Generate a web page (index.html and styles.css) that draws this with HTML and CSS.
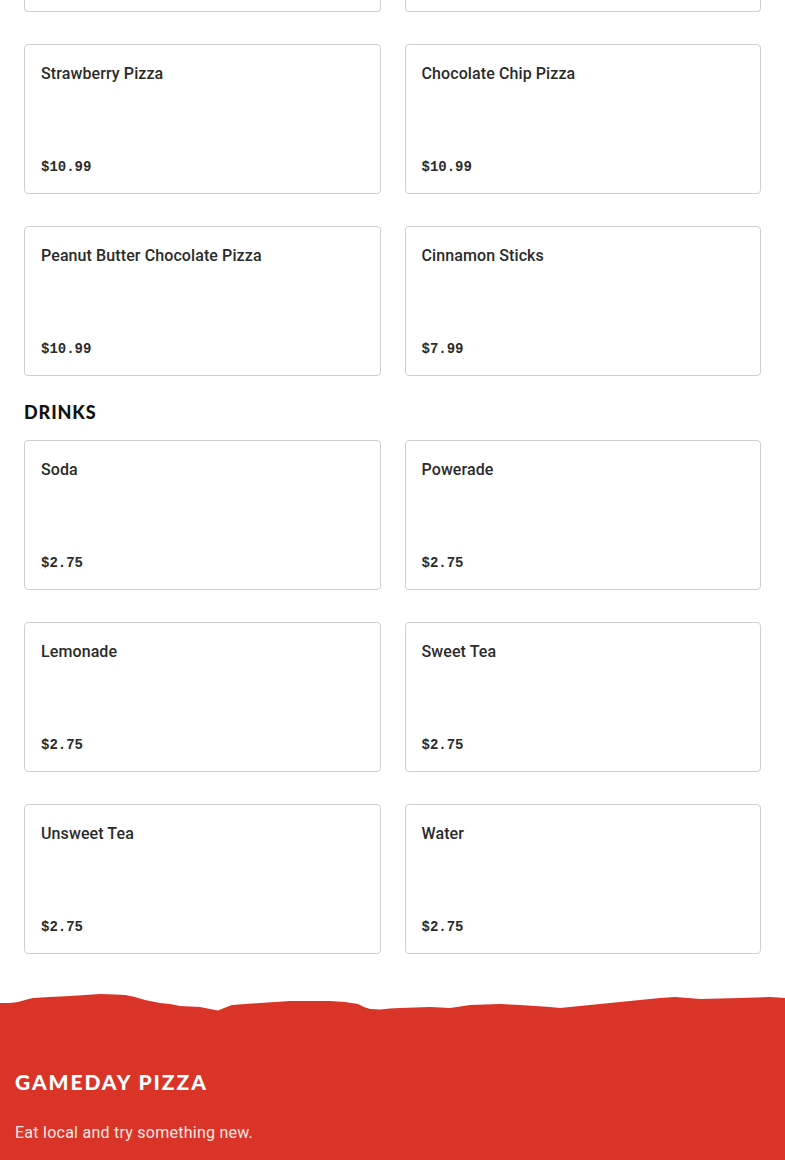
FILE: index.html
```html
<!DOCTYPE html>
<html lang="en">
<head>
<meta charset="utf-8">
<title>Gameday Pizza Menu</title>
<link rel="stylesheet" href="styles.css">
</head>
<body>
<main class="menu">
  <section class="section">
    <div class="grid">
      <div class="card card-stub" aria-hidden="true"></div>
      <div class="card card-stub" aria-hidden="true"></div>
      <div class="card"><h3 class="card-title">Strawberry Pizza</h3><p class="price">$10.99</p></div>
      <div class="card"><h3 class="card-title">Chocolate Chip Pizza</h3><p class="price">$10.99</p></div>
      <div class="card"><h3 class="card-title">Peanut Butter Chocolate Pizza</h3><p class="price">$10.99</p></div>
      <div class="card"><h3 class="card-title">Cinnamon Sticks</h3><p class="price">$7.99</p></div>
    </div>
  </section>
  <section class="section">
    <h2 class="section-title">DRINKS</h2>
    <div class="grid">
      <div class="card"><h3 class="card-title">Soda</h3><p class="price">$2.75</p></div>
      <div class="card"><h3 class="card-title">Powerade</h3><p class="price">$2.75</p></div>
      <div class="card"><h3 class="card-title">Lemonade</h3><p class="price">$2.75</p></div>
      <div class="card"><h3 class="card-title">Sweet Tea</h3><p class="price">$2.75</p></div>
      <div class="card"><h3 class="card-title">Unsweet Tea</h3><p class="price">$2.75</p></div>
      <div class="card"><h3 class="card-title">Water</h3><p class="price">$2.75</p></div>
    </div>
  </section>
</main>
<footer class="footer">
  <svg class="torn" viewBox="0 0 785 24" preserveAspectRatio="none" aria-hidden="true">
    <path d="M0 13 L10 13 L18 12 L25 10 L33 8 L50 7 L70 6 L85 5 L100 4 L115 4.5 L125 5 L135 7 L145 10 L160 13 L170 14 L180 16 L200 17 L210 19 L218 20.5 L224 18 L232 15 L245 14 L260 13 L275 12 L290 11 L310 11 L330 11 L345 12 L358 14 L364 17 L370 19 L380 19.5 L390 18.5 L400 18 L415 17.5 L430 17 L440 17.5 L450 18 L460 16.5 L470 15 L485 14.5 L500 14 L510 14.5 L520 15 L535 16 L550 17 L560 18 L575 16.5 L590 15 L600 14 L620 12 L640 10 L660 8 L675 7 L688 8 L700 9 L720 8.5 L740 8 L755 7.5 L770 7 L778 7.5 L785 8 L785 24 L0 24 Z" fill="#d93427"/>
  </svg>
  <div class="footer-body">
    <h2 class="brand">GAMEDAY PIZZA</h2>
    <p class="tagline">Eat local and try something new.</p>
  </div>
</footer>
</body>
</html>
```
FILE: styles.css
```css
* { box-sizing: border-box; }
html, body { margin: 0; padding: 0; background: #fff; }
body {
  font-family: Roboto, "Liberation Sans", Arial, sans-serif;
  color: #2b2b2b;
}
.menu {
  padding: 0 24px;
  display: flex;
  flex-direction: column;
}
.grid {
  display: grid;
  grid-template-columns: 1fr 1fr;
  column-gap: 24px;
  row-gap: 32px;
}
.card {
  height: 150px;
  border: 1px solid #cfcfcf;
  border-radius: 4px;
  padding: 17px 16px 16px;
  display: flex;
  flex-direction: column;
  justify-content: space-between;
  background: #fff;
}
.card-stub {
  height: 12px;
  padding: 0;
  border-top: none;
  border-radius: 0 0 4px 4px;
}
.card-title {
  margin: 0;
  font-size: 16px;
  line-height: 24px;
  font-weight: 500;
  letter-spacing: 0.1px;
  color: #2b2b2b;
}
.price {
  margin: 0;
  font-family: "Liberation Mono", "DejaVu Sans Mono", monospace;
  font-weight: 700;
  font-size: 14px;
  line-height: 20px;
  color: #2b2b2b;
}
.section-title {
  margin: 24px 0 16px;
  font-family: Lato, "Liberation Sans", Arial, sans-serif;
  font-weight: 900;
  font-size: 18px;
  line-height: 24px;
  letter-spacing: 0.9px;
  color: #111;
}
.footer {
  margin-top: 36px;
  display: flex;
  flex-direction: column;
}
.torn {
  display: block;
  width: 100%;
  height: 24px;
}
.footer-body {
  background: #d93427;
  margin-top: -1px;
  padding: 55px 15px 20px;
  color: #fbeeea;
}
.brand {
  margin: 0;
  font-family: Lato, "Liberation Sans", Arial, sans-serif;
  font-weight: 900;
  font-size: 21px;
  line-height: 28px;
  letter-spacing: 1.9px;
  color: #fff;
}
.tagline {
  margin: 25px 0 0;
  font-size: 16px;
  line-height: 24px;
  letter-spacing: 0.25px;
  color: #f8e6e2;
}
```
